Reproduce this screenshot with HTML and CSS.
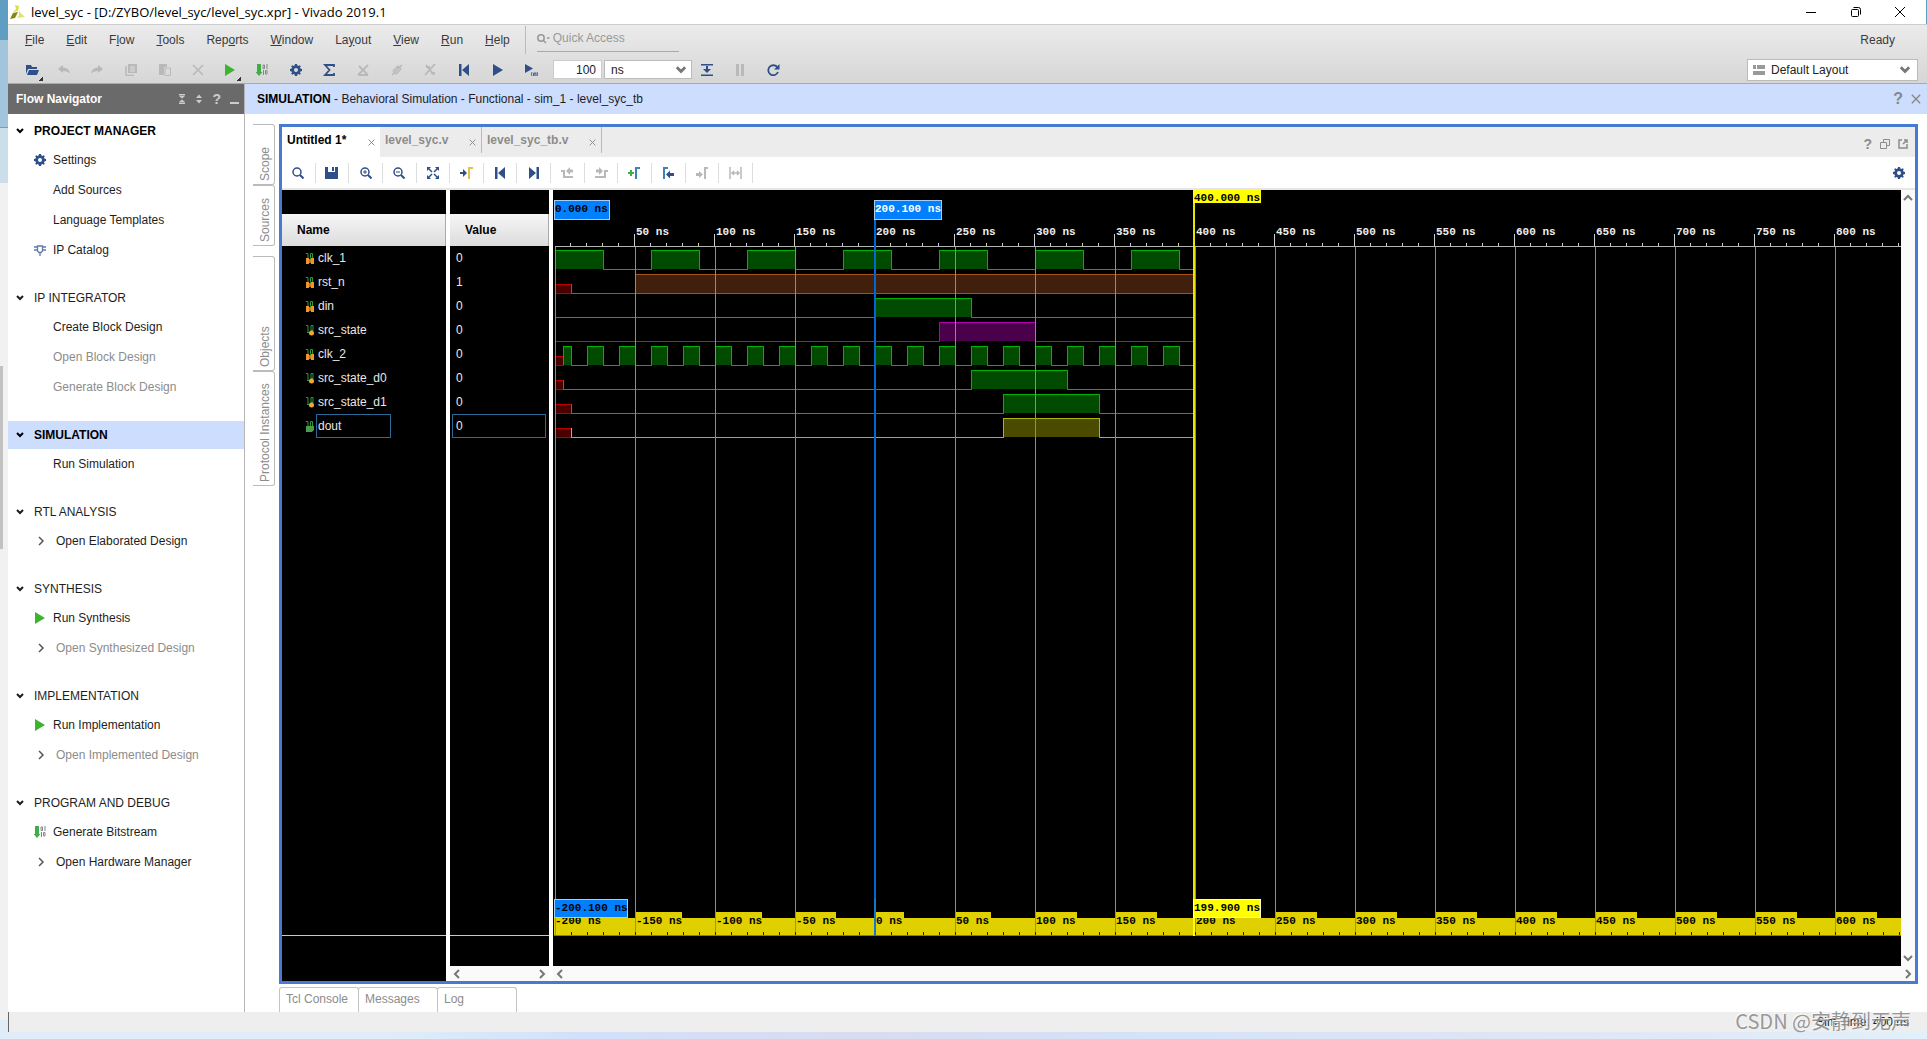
FILE: index.html
```html
<!DOCTYPE html>
<html lang="en">
<head>
<meta charset="utf-8">
<title>level_syc - Vivado 2019.1</title>
<link rel="stylesheet" href="styles.css">
</head>
<body>
<svg class="defs" aria-hidden="true">
  <symbol id="gear" viewBox="0 0 12 12"><path fill="currentColor" fill-rule="evenodd" d="M5 0h2l.4 1.6 1 .4L9.800 1.200l1 1L10 3.600l.4 1L12 5v2l-1.600.4-.4 1 .8 1.400-1 1-1.400-.8-1 .4L7 12H5l-.4-1.600-1-.4-1.400.8-1-1L2 8.400l-.4-1L0 7V5l1.600-.4.4-1-.8-1.400 1-1L3.600 2l1-.4zM6 4a2 2 0 1 0 0 4a2 2 0 0 0 0-4z"/></symbol>
  <symbol id="down" viewBox="0 0 10 10"><path d="M2 3l3 3 3-3" fill="none" stroke="currentColor" stroke-width="2"/></symbol>
  <symbol id="up" viewBox="0 0 10 10"><path d="M1 7l4-4 4 4" fill="none" stroke="currentColor" stroke-width="2"/></symbol>
  <symbol id="right" viewBox="0 0 10 10"><path d="M3 1l4 4-4 4" fill="none" stroke="currentColor" stroke-width="1.500"/></symbol>
  <symbol id="left" viewBox="0 0 10 10"><path d="M7 1L3 5l4 4" fill="none" stroke="currentColor" stroke-width="2"/></symbol>
  <symbol id="play" viewBox="0 0 12 12"><path d="M1 0l10 6-10 6z" fill="currentColor"/></symbol>
  <symbol id="bits" viewBox="0 0 12 12"><path d="M1 0h4v8h1.500L3 12-.5 8H1z" fill="#3fae49"/><path d="M7 1h1.500v3.500H7zM11 0v5M7.500 6v5M9.500 6.500H11V10H9.500z" fill="none" stroke="#888"/></symbol>
  <symbol id="chip" viewBox="0 0 12 12"><path d="M3.500 2h5v5l-1.500 1.500h-2L3.500 7zM0 3h3.500M0 6h3.500M8.500 3H12M8.500 6H12M6 8.500V12" fill="none" stroke="#6079aa" stroke-width="1.300"/></symbol>
  <symbol id="cross" viewBox="0 0 12 12"><path d="M1 1l10 10M11 1L1 11" fill="none" stroke="currentColor" stroke-width="1.600"/></symbol>
  <symbol id="first" viewBox="0 0 12 12"><path d="M1 0h2.500v12H1zM11 0v12L4 6z" fill="currentColor"/></symbol>
  <symbol id="last" viewBox="0 0 12 12"><path d="M8.500 0H11v12H8.500zM1 0v12l7-6z" fill="currentColor"/></symbol>
  <symbol id="lens" viewBox="0 0 12 12"><circle cx="5" cy="5" r="4" fill="none" stroke="currentColor" stroke-width="1.500"/><path d="M8 8l3.500 3.500" stroke="currentColor" stroke-width="2"/></symbol>
  <symbol id="sig-in" viewBox="0 0 8 12"><path d="M0 1.500h2v5M4.500 1.500h2v5h-2z" fill="none" stroke="#2c9a3c"/><path d="M0 6h3v2h2V6h3v6H5v-2H3v2H0z" fill="#f0952a"/><path d="M3 7h2v4H3z" fill="#c07418"/></symbol>
  <symbol id="sig-reg" viewBox="0 0 8 12"><path d="M0 1.500h2v7M5 1.500h2v5h-2zM1 8.500h4" fill="none" stroke="#2c9a3c"/><circle cx="5.500" cy="9" r="2.500" fill="#f5a13c"/></symbol>
  <symbol id="sig-out" viewBox="0 0 8 12"><path d="M0 1.500h2v5M4.500 1.500h2v5h-2z" fill="none" stroke="#2c9a3c"/><path d="M0 6h8v4l-2 2H0z" fill="#4a9c4a"/></symbol>
</svg>

<div class="desktop">
  <aside class="behind"><i class="b1"></i><i class="b2"></i><i class="b3"></i><i class="b4"></i><i class="b5"></i></aside>
  <div class="window">
    <header class="titlebar">
      <svg width="16" height="14" viewBox="0 0 16 14"><path d="M5 0l4 1-1 5-5 1 3-3z" fill="#d9e04a"/><path d="M3 8l5-1-3 6-5 1z" fill="#85850f"/><path d="M9 6l6 6-8 1 2-3z" fill="#dfe27a"/></svg>
      <span class="caption">level_syc - [D:/ZYBO/level_syc/level_syc.xpr] - Vivado 2019.1</span>
      <button aria-label="Minimize"><svg width="12" height="12"><path d="M1 6.500h10" stroke="#000"/></svg></button>
      <button aria-label="Restore"><svg width="12" height="12" fill="none" stroke="#000"><rect x="1.500" y="3.500" width="7" height="7" rx="1"/><path d="M3.500 1.500h5q2 0 2 2v5"/></svg></button>
      <button aria-label="Close"><svg width="12" height="12" stroke="#000"><path d="M1 1l10 10M11 1L1 11"/></svg></button>
    </header>

    <div class="chrome">
      <div class="menubar">
        <nav class="menus">
          <button><u>F</u>ile</button><button><u>E</u>dit</button><button>F<u>l</u>ow</button><button><u>T</u>ools</button><button>Rep<u>o</u>rts</button><button><u>W</u>indow</button><button>La<u>y</u>out</button><button><u>V</u>iew</button><button><u>R</u>un</button><button><u>H</u>elp</button>
        </nav>
        <label class="quick"><svg width="13" height="11" viewBox="0 0 13 11" fill="none" stroke="#999" stroke-width="1.500"><circle cx="4" cy="5" r="3.200"/><path d="M6 7l3 3"/><path d="M10 5h2.500"/></svg><input type="text" placeholder="Quick Access" aria-label="Quick Access"></label>
        <span class="ready">Ready</span>
      </div>
      <div class="toolbar">
        <div class="actions">
        <button class="more" aria-label="Open"><svg width="13" height="12" viewBox="0 0 13 12" fill="#2f4f88"><path d="M0 1h5l1 2h5v2H2L0 10z"/><path d="M3 6h10l-2 5H1z"/></svg></button>
        <button class="off" aria-label="Undo"><svg width="12" height="10" viewBox="0 0 12 10"><path d="M0 4l5-4v2.500q6 0 7 6-3-3-7-2.500V8z" fill="currentColor"/></svg></button>
        <button class="off" aria-label="Redo"><svg width="12" height="10" viewBox="0 0 12 10"><path d="M12 4L7 0v2.500q-6 0-7 6 3-3 7-2.500V8z" fill="currentColor"/></svg></button>
        <button class="off" aria-label="Copy"><svg width="12" height="12" viewBox="0 0 12 12"><path d="M3 0h9v9H3z" fill="currentColor"/><path d="M1 2v9.500h8" fill="none" stroke="currentColor" stroke-width="1.500"/><path d="M5 3h5M5 5h5M5 7h5" stroke="#ddd"/></svg></button>
        <button class="off" aria-label="Paste"><svg width="12" height="12" viewBox="0 0 12 12"><path d="M0 0h8v3H5v8H0z" fill="currentColor"/><path d="M6 4h5.500v7.500H6z" fill="none" stroke="currentColor"/></svg></button>
        <button class="off" aria-label="Delete"><svg width="12" height="12"><use href="#cross"/></svg></button>
        <button class="more green" aria-label="Run"><svg width="12" height="12"><use href="#play"/></svg></button>
        <button aria-label="Bitstream"><svg width="12" height="12"><use href="#bits"/></svg></button>
        <button aria-label="Settings"><svg width="12" height="12"><use href="#gear"/></svg></button>
        <button aria-label="Report"><svg width="12" height="12" viewBox="0 0 12 12"><path d="M11 3V1H2l4.500 5L2 11h9V9" fill="none" stroke="currentColor" stroke-width="1.800"/></svg></button>
        <button class="off" aria-label="Clear"><svg width="12" height="12" viewBox="0 0 12 12"><path d="M2 2l9 9M11 1L1 11M1 11h10" fill="none" stroke="currentColor" stroke-width="1.800"/></svg></button>
        <button class="off" aria-label="Disable"><svg width="12" height="12" viewBox="0 0 12 12"><path d="M11 1L1 11M2 7l5-5M5 10l5-5M2 7l3 3M7 2l3 3" fill="none" stroke="currentColor" stroke-width="1.500"/></svg></button>
        <button class="off" aria-label="Cancel"><svg width="12" height="12" viewBox="0 0 12 12"><path d="M2 1l4 5 4 5M11 0L1 11M2 3h4M7 9h4" fill="none" stroke="currentColor" stroke-width="1.800"/></svg></button>
        <button aria-label="Restart"><svg width="12" height="12"><use href="#first"/></svg></button>
        <button aria-label="Run all"><svg width="12" height="12"><use href="#play"/></svg></button>
        <button aria-label="Run for"><svg width="14" height="12" viewBox="0 0 14 12"><path d="M1 0l8 4.500L1 9z" fill="currentColor"/><path d="M8 8q-1.500 2 0 4M9.500 12V9h2.500v3M10.800 9v3M13 8q1.500 2 0 4" fill="none" stroke="currentColor" stroke-width=".8"/></svg></button>
        </div>
        <input class="amount" type="text" value="100" aria-label="Run time">
        <span class="pick unit"><select aria-label="Time unit"><option>ns</option></select><svg width="14" height="14"><use href="#down"/></svg></span>
        <div class="actions run">
        <button aria-label="Step"><svg width="12" height="12" viewBox="0 0 12 12"><path d="M0 0h12v1.500H0zM0 10.500h12V12H0zM5 2h2v3h3L6 9 2 5h3z" fill="currentColor"/></svg></button>
        <button class="off" aria-label="Pause"><svg width="12" height="12"><path d="M2 0h3v12H2zM7 0h3v12H7z" fill="currentColor"/></svg></button>
        <button aria-label="Relaunch"><svg width="13" height="12" viewBox="0 0 13 12"><path d="M10.500 3.500A5 5 0 1 0 11 8" fill="none" stroke="currentColor" stroke-width="1.800"/><path d="M12.500 0v5.500H7z" fill="currentColor"/></svg></button>
        </div>
        <span class="pick layout"><svg width="12" height="10" viewBox="0 0 12 10"><path d="M0 0h3v4H0zM4 0h8v4H4zM0 6h12v4H0z" fill="#999"/></svg><select aria-label="Layout"><option>Default Layout</option></select><svg width="14" height="14"><use href="#down"/></svg></span>
      </div>
    </div>

    <div class="main">
      <aside class="navigator">
        <h2>Flow Navigator
          <span><svg width="8" height="10" viewBox="0 0 8 10"><path d="M1 0h6v1.500H1zM1 8.500h6V10H1zM1 2h6L4 4.500zM1 8h6L4 5.500z" fill="currentColor"/></svg><svg width="8" height="10" viewBox="0 0 8 10"><path d="M1 4l3-3.500L7 4zM1 6l3 3.500L7 6z" fill="currentColor"/></svg><b>?</b><svg width="9" height="10"><path d="M0 8h9v2H0z" fill="currentColor"/></svg></span>
        </h2>
        <section><h3 class="bold"><svg width="10" height="10"><use href="#down"/></svg>PROJECT MANAGER</h3>
          <a href="#"><svg class="navy" width="12" height="12"><use href="#gear"/></svg>Settings</a><a href="#">Add Sources</a><a href="#">Language Templates</a><a href="#"><svg width="12" height="12"><use href="#chip"/></svg>IP Catalog</a></section>
        <section><h3><svg width="10" height="10"><use href="#down"/></svg>IP INTEGRATOR</h3>
          <a href="#">Create Block Design</a><a class="dim" href="#">Open Block Design</a><a class="dim" href="#">Generate Block Design</a></section>
        <section><h3 class="bold current"><svg width="10" height="10"><use href="#down"/></svg>SIMULATION</h3>
          <a href="#">Run Simulation</a></section>
        <section><h3><svg width="10" height="10"><use href="#down"/></svg>RTL ANALYSIS</h3>
          <a class="sub" href="#"><svg width="10" height="10"><use href="#right"/></svg>Open Elaborated Design</a></section>
        <section><h3><svg width="10" height="10"><use href="#down"/></svg>SYNTHESIS</h3>
          <a href="#"><svg class="green" width="11" height="12"><use href="#play"/></svg>Run Synthesis</a><a class="sub dim" href="#"><svg width="10" height="10"><use href="#right"/></svg>Open Synthesized Design</a></section>
        <section><h3><svg width="10" height="10"><use href="#down"/></svg>IMPLEMENTATION</h3>
          <a href="#"><svg class="green" width="11" height="12"><use href="#play"/></svg>Run Implementation</a><a class="sub dim" href="#"><svg width="10" height="10"><use href="#right"/></svg>Open Implemented Design</a></section>
        <section><h3><svg width="10" height="10"><use href="#down"/></svg>PROGRAM AND DEBUG</h3>
          <a href="#"><svg width="12" height="12"><use href="#bits"/></svg>Generate Bitstream</a><a class="sub" href="#"><svg width="10" height="10"><use href="#right"/></svg>Open Hardware Manager</a></section>
      </aside>

      <main class="work">
        <div class="context"><p><b>SIMULATION</b> - Behavioral Simulation - Functional - sim_1 - level_syc_tb</p><b class="q">?</b><svg width="10" height="10"><use href="#cross"/></svg></div>
        <div class="stage">
          <div class="rail">
            <button class="t1">Scope</button><button class="t1">Sources</button><i></i><button class="t2">Objects</button><button class="t2">Protocol Instances</button>
          </div>
          <div class="center">
            <div class="panel">
              <div class="tabs">
                <button class="tab on">Untitled 1*<svg width="7" height="7"><use href="#cross"/></svg></button><button class="tab">level_syc.v<svg width="7" height="7"><use href="#cross"/></svg></button><button class="tab wide">level_syc_tb.v<svg width="7" height="7"><use href="#cross"/></svg></button>
                <span class="tools"><b>?</b><svg width="10" height="10" fill="none" stroke="currentColor"><path d="M.5 3.500h6v6h-6zM3.500 3V.5h6v6H7"/></svg><svg width="10" height="10" fill="none" stroke="currentColor" stroke-width="1.500"><path d="M4 1H1v8h8V5M5 5l4-4M6 1h3v3"/></svg></span>
              </div>
              <div class="wavebar">
                <div class="wavebtns">
                  <button aria-label="Find"><svg width="12" height="12"><use href="#lens"/></svg></button>
                  <button aria-label="Save"><svg width="13" height="12"><path d="M0 0h3v5h7V0h3v12H0zM7 0h2v4H7z" fill="currentColor"/></svg></button>
                  <button aria-label="Zoom in"><svg width="12" height="12"><use href="#lens"/><path d="M3 5h4M5 3v4" stroke="currentColor"/></svg></button>
                  <button aria-label="Zoom out"><svg width="12" height="12"><use href="#lens"/><path d="M3 5h4" stroke="currentColor"/></svg></button>
                  <button aria-label="Zoom fit"><svg width="12" height="12" viewBox="0 0 12 12"><path d="M0 0h4L0 4zM12 0v4L8 0zM0 12V8l4 4zM12 12H8l4-4z" fill="currentColor"/><path d="M1 1l4 4M11 1L7 5M1 11l4-4M11 11L7 7" stroke="currentColor" stroke-width="1.500"/></svg></button>
                  <button aria-label="Go to cursor"><svg width="13" height="12" viewBox="0 0 13 12"><path d="M0 5h3V2l4 4-4 4V7H0z" fill="currentColor"/><path d="M9 12V1h4" fill="none" stroke="#e0c050" stroke-width="2"/></svg></button>
                  <button aria-label="Go to start"><svg width="12" height="12"><use href="#first"/></svg></button>
                  <button aria-label="Go to end"><svg width="12" height="12"><use href="#last"/></svg></button>
                  <button class="off" aria-label="Previous transition"><svg width="13" height="12" viewBox="0 0 13 12"><path d="M0 4h3v6h9" fill="none" stroke="currentColor" stroke-width="2"/><path d="M5 4l4-4v2.500h3v3H9V8z" fill="currentColor"/></svg></button>
                  <button class="off" aria-label="Next transition"><svg width="13" height="12" viewBox="0 0 13 12"><path d="M0 10h10V4h3" fill="none" stroke="currentColor" stroke-width="2"/><path d="M8 4L4 0v2.500H1v3h3V8z" fill="currentColor"/></svg></button>
                  <button aria-label="Add marker"><svg width="13" height="12" viewBox="0 0 13 12"><path d="M0 6h6M3 3v6" stroke="#3fae49" stroke-width="2"/><path d="M8 12V1h4" fill="none" stroke="#3a84b8" stroke-width="2"/></svg></button>
                  <button aria-label="Previous marker"><svg width="13" height="12" viewBox="0 0 13 12"><path d="M2 12V1h4" fill="none" stroke="#3a84b8" stroke-width="2"/><path d="M4 7.500l4-4V6h4v3H8v2.500z" fill="currentColor"/></svg></button>
                  <button class="off" aria-label="Next marker"><svg width="13" height="12" viewBox="0 0 13 12"><path d="M0 6h3V4l4 3.500L3 11V9H0z" fill="currentColor"/><path d="M9 12V1h3" fill="none" stroke="currentColor" stroke-width="2"/></svg></button>
                  <button class="off" aria-label="Swap cursors"><svg width="13" height="12" viewBox="0 0 13 12"><path d="M1 0v12M12 0v12M3 6h7M5 4L3 6l2 2M8 4l2 2-2 2" fill="none" stroke="currentColor" stroke-width="1.500"/></svg></button>
                </div>
                <button class="cog" aria-label="Wave settings"><svg width="12" height="12"><use href="#gear"/></svg></button>
              </div>
              <div class="viewer">
                <div class="col names">
                  <h4>Name</h4>
                  <ul>
                    <li><svg width="8" height="12"><use href="#sig-in"/></svg><span>clk_1</span></li>
                    <li><svg width="8" height="12"><use href="#sig-in"/></svg><span>rst_n</span></li>
                    <li><svg width="8" height="12"><use href="#sig-in"/></svg><span>din</span></li>
                    <li><svg width="8" height="12"><use href="#sig-reg"/></svg><span>src_state</span></li>
                    <li><svg width="8" height="12"><use href="#sig-in"/></svg><span>clk_2</span></li>
                    <li><svg width="8" height="12"><use href="#sig-reg"/></svg><span>src_state_d0</span></li>
                    <li><svg width="8" height="12"><use href="#sig-reg"/></svg><span>src_state_d1</span></li>
                    <li class="picked"><svg width="8" height="12"><use href="#sig-out"/></svg><span>dout</span></li>
                  </ul>
                  <div class="foot"></div>
                </div>
                <div class="col values">
                  <h4>Value</h4>
                  <ul><li>0</li><li>1</li><li>0</li><li>0</li><li>0</li><li>0</li><li>0</li><li class="picked">0</li></ul>
                  <div class="foot"></div>
                  <div class="hbar"><svg width="10" height="10"><use href="#left"/></svg><svg class="flip" width="10" height="10"><use href="#left"/></svg></div>
                </div>
                <div class="wave">
                  <div class="plot">
                    <!-- time ruler: 16px per 10 ns -->
                    <svg class="ruler" width="100%" height="57" shape-rendering="crispEdges">
                      <defs><pattern id="ticks" x="1" y="0" width="80" height="57" patternUnits="userSpaceOnUse"><path d="M0 44h1v12h-1zM16 53h1v3h-1zM32 53h1v3h-1zM48 53h1v3h-1zM64 53h1v3h-1z" fill="#ccc"/></pattern></defs>
                      <rect x="17" width="100%" height="57" fill="url(#ticks)"/>
                      <rect x="2" y="56" width="100%" height="1" fill="#b4b4b4"/>
                      <g fill="#eee"><text x="83" y="45">50 ns</text><text x="163" y="45">100 ns</text><text x="243" y="45">150 ns</text><text x="323" y="45">200 ns</text><text x="403" y="45">250 ns</text><text x="483" y="45">300 ns</text><text x="563" y="45">350 ns</text><text x="643" y="45">400 ns</text><text x="723" y="45">450 ns</text><text x="803" y="45">500 ns</text><text x="883" y="45">550 ns</text><text x="963" y="45">600 ns</text><text x="1043" y="45">650 ns</text><text x="1123" y="45">700 ns</text><text x="1203" y="45">750 ns</text><text x="1283" y="45">800 ns</text></g>
                      <path d="M1 10h56v20h-56zM321 10h68v20h-68z" fill="#a8cdf2"/><path d="M2 11h54v18h-54zM322 11h66v18h-66z" fill="#0080ff"/>
                      <text x="2" y="22">0.000 ns</text><text x="322" y="22" fill="#fff">200.100 ns</text>
                      <path d="M321 30h2v27h-2z" fill="#0068d0"/>
                      <path d="M640 0h68v13h-68z" fill="#ff0"/><path d="M640 13h2v44h-2z" fill="#e6e600"/><text x="641" y="11">400.000 ns</text>
                    </svg>
                    <svg class="traces" width="100%" shape-rendering="crispEdges">
                      <defs><pattern id="grid" x="2" y="0" width="80" height="80" patternUnits="userSpaceOnUse"><path d="M0 0h1v80H0z" fill="#8c8c8c"/></pattern></defs>
                      <g transform="translate(2)">
                        <path class="x" d="M0 46V37H16V46zM0 118V109H8V118zM0 142V133H8V142zM0 166V157H16V166zM0 190V181H16V190z"/>
                        <path class="g" d="M0 22V3h48v19h48V3h48v19h48V3h48v19h48V3h48v19h48V3h48v19h48V3h48v19h48V3h48v19h14"/>
                        <path class="o" d="M16 46h64V27h558v19H80"/>
                        <path class="g" d="M0 70h320V51h96v19h222"/>
                        <path class="m" d="M0 94h384V75h96v19h158"/>
                        <path class="g" d="M8 118v-19h8v19h16v-19h16v19h16v-19h16v19h16v-19h16v19h16v-19h16v19h16v-19h16v19h16v-19h16v19h16v-19h16v19h16v-19h16v19h16v-19h16v19h16v-19h16v19h16v-19h16v19h16v-19h16v19h16v-19h16v19h16v-19h16v19h16v-19h16v19h16v-19h16v19h16v-19h16v19h16v-19h16v19h16v-19h16v19h14"/>
                        <path class="g" d="M8 142h408v-19h96v19h126"/>
                        <path class="g" d="M16 166h432v-19h96v19h94"/>
                        <path class="y" d="M16 190h432v-19h96v19h94"/>
                        <path d="M16 37v9" stroke="#a85018"/><path d="M8 133v9M16 157v9" stroke="#00b400"/><path d="M16 181v9" stroke="#e0b000"/>
                      </g>
                      <rect width="100%" height="100%" fill="url(#grid)"/>
                      <rect x="321" width="2" height="100%" fill="#0068d0"/>
                      <rect x="640" width="2" height="100%" fill="#e6e600"/>
                    </svg>
                    <!-- offsets from the main cursor -->
                    <svg class="ruler" width="100%" height="67" shape-rendering="crispEdges">
                      <defs><pattern id="marks" x="2" y="0" width="16" height="67" patternUnits="userSpaceOnUse"><path d="M0 33h1v3h-1z" fill="#222"/></pattern></defs>
                      <rect width="100%" height="13" fill="url(#grid)"/>
                      <path fill="#e0d000" d="M82 13h47v6h-47zM162 13h47v6h-47zM242 13h41v6h-41zM322 13h29v6h-29zM402 13h36v6h-36zM482 13h42v6h-42zM562 13h42v6h-42zM722 13h42v6h-42zM802 13h42v6h-42zM882 13h42v6h-42zM962 13h42v6h-42zM1042 13h42v6h-42zM1122 13h42v6h-42zM1202 13h42v6h-42zM1282 13h42v6h-42z"/>
                      <rect x="1" y="19" width="100%" height="18" fill="#e0d000"/>
                      <rect y="13" width="100%" height="23" fill="url(#grid)"/>
                      <rect x="16" width="100%" height="67" fill="url(#marks)"/><rect x="1" y="36" width="100%" height="1" fill="#8a8000"/>
                      <g><text x="2" y="25">-200 ns</text><text x="83" y="25">-150 ns</text><text x="163" y="25">-100 ns</text><text x="243" y="25">-50 ns</text><text x="323" y="25">0 ns</text><text x="403" y="25">50 ns</text><text x="483" y="25">100 ns</text><text x="563" y="25">150 ns</text><text x="643" y="25">200 ns</text><text x="723" y="25">250 ns</text><text x="803" y="25">300 ns</text><text x="883" y="25">350 ns</text><text x="963" y="25">400 ns</text><text x="1043" y="25">450 ns</text><text x="1123" y="25">500 ns</text><text x="1203" y="25">550 ns</text><text x="1283" y="25">600 ns</text></g>
                      <path d="M321 0h2v37h-2z" fill="#1478c8"/><path d="M640 0h2v37h-2z" fill="#ff0"/>
                      <path d="M1 0h74v19h-74z" fill="#a8cdf2"/><path d="M2 1h72v17h-72z" fill="#0080ff"/><text x="2" y="12">-200.100 ns</text>
                      <path d="M640 0h68v19h-68z" fill="#ffffc0"/><path d="M641 1h66v17h-66z" fill="#ff0"/><text x="641" y="12">199.900 ns</text>
                    </svg>
                  </div>
                  <div class="vbar"><svg width="10" height="10"><use href="#up"/></svg><svg class="flip" width="10" height="10"><use href="#up"/></svg></div>
                  <div class="hbar"><svg width="10" height="10"><use href="#left"/></svg><svg class="flip" width="10" height="10"><use href="#left"/></svg></div>
                </div>
              </div>
            </div>
            <div class="dock"><button>Tcl Console</button><button>Messages</button><button>Log</button></div>
          </div>
        </div>
      </main>
    </div>
    <footer class="status">Sim Time: 400 ns</footer>
  </div>
</div>
<div class="watermark">CSDN @安静到无声</div>
</body>
</html>
```
FILE: styles.css
```css
* { box-sizing: border-box; }
body { margin: 0; overflow: hidden; font: 12px/16px "Liberation Sans", Arial, sans-serif; color: #1e1e1e; background: #fff; }
button { font: inherit; color: inherit; background: none; border: 0; padding: 0; }
input, select { font: inherit; color: inherit; border: 0; background: none; padding: 0; margin: 0; outline: 0; }
h2, h3, h4, p, ul { margin: 0; padding: 0; font: inherit; }
ul { list-style: none; }
svg { display: block; flex: none; }
.defs { position: absolute; width: 0; height: 0; }

.desktop { display: flex; height: 100vh; padding-bottom: 7px; background: linear-gradient(90deg, #e0edf8, #e0edf8 20%, #d3e0fa 30%, #d8dcf0 45%, #d5e2f8 60%, #dfe6f4 80%, #e2f0fa); }
.behind { width: 8px; flex: none; display: flex; flex-direction: column; }
.b1 { height: 40px; background: #5f9ec2; }
.b2 { height: 88px; background: #a2c5db; border-bottom: 1px solid #7c9eb2; }
.b3 { height: 55px; background: #cbdfeb; }
.b4 { flex: 1; background: linear-gradient(#c1c1c1, #c1c1c1) 0 183px / 3px 183px no-repeat #f1f1f1; }
.b5 { height: 12px; }
.window { flex: 1; min-width: 0; display: flex; flex-direction: column; background: #fff; }

.titlebar { height: 24px; flex: none; display: flex; align-items: center; padding: 0 9px 0 2px; border-right: 1px solid #5aa0c0; }
.caption { flex: 1; padding-left: 5px; color: #000; font: 13px/16px "Open Sans", "Noto Sans", sans-serif; }
.titlebar button { width: 45px; display: grid; place-items: center; }
.titlebar button:last-child { width: 39px; padding-left: 5px; }

.chrome { height: 60px; flex: none; border-top: 1px solid #ccc; border-bottom: 1px solid #aaa; background: linear-gradient(#ebebeb, #d6d6d6); color: #3a3a3a; }
.menubar { height: 30px; display: flex; align-items: center; }
.menus { display: flex; gap: 22px; padding: 0 15px 0 17px; height: 28px; border-right: 1px solid #bbb; align-items: center; margin-right: 11px; }
.quick { width: 142px; height: 24px; display: flex; align-items: center; gap: 3px; padding-bottom: 3px; border-bottom: 1px solid #aaa; }
.quick input { width: 100px; }
.quick input::placeholder { color: #999; opacity: 1; }
.ready { margin: 0 32px 0 auto; }
.toolbar { height: 29px; display: flex; align-items: center; padding: 0 9px; color: #2f4f88; }
.actions { display: flex; width: 531px; }
.actions.run { width: 100px; margin-left: -2px; }
.toolbar button { flex: 1; height: 22px; display: grid; place-items: center; }
.toolbar .off, .wavebtns .off { color: #b9b9b9; }
.toolbar .more { flex: none; width: 30px; background: linear-gradient(135deg, transparent 50%, #333 50%) 22px 18px / 4px 4px no-repeat; }
.toolbar .green, .green { color: #3eb32d; }
.amount { width: 49px; height: 19px; margin-left: 5px; padding-right: 5px; background: #fff; border: 1px solid #ccc; text-align: right; color: #222; }
.pick { display: flex; align-items: center; background: #fff; border: 1px solid #bbb; color: #777; }
.pick select { flex: 1; appearance: none; color: #222; }
.unit { width: 88px; height: 19px; margin-left: 2px; padding: 0 3px 0 6px; }
.layout { width: 171px; height: 22px; margin-left: auto; padding: 0 5px; gap: 6px; }

.main { flex: 1; min-height: 0; display: flex; }
.navigator { width: 237px; flex: none; border-right: 1px solid #b5b5b5; overflow: hidden; }
.navigator h2 { height: 30px; margin-bottom: 3px; padding: 0 5px 0 8px; display: flex; align-items: center; justify-content: space-between; background: #6a6a6a; color: #fff; font-weight: bold; }
.navigator h2 span { display: flex; align-items: center; gap: 9px; color: #ccc; font-size: 14px; }
.navigator section { padding-bottom: 19px; }
.navigator h3 { height: 28px; display: flex; align-items: center; gap: 9px; padding-left: 7px; }
.navigator .bold { font-weight: bold; color: #000; }
.navigator .current { background: #ccddfe; }
.navigator a { height: 30px; display: flex; align-items: center; padding-left: 45px; color: inherit; text-decoration: none; }
.navigator a svg { margin: 0 7px 0 -19px; width: 12px; }
.navigator .sub { padding-left: 48px; }
.navigator .sub svg { margin: 0 10px 0 -20px; width: 10px; color: #555; }
.navigator .dim { color: #8c8c8c; }
.navy { color: #2f4f88; }

.work { flex: 1; min-width: 0; display: flex; flex-direction: column; }
.context { height: 30px; flex: none; display: flex; align-items: center; gap: 8px; padding: 0 6px 0 12px; background: #ccddfe; color: #888; }
.context p { flex: 1; color: #1e1e1e; }
.context p b { color: #000; }
.q { font-size: 16px; }
.stage { flex: 1; min-height: 0; display: flex; padding: 10px 9px 0 8px; }
.rail { width: 22px; flex: none; margin-right: 4px; display: flex; flex-direction: column; }
.rail button { writing-mode: vertical-rl; transform: rotate(180deg); display: flex; align-items: center; padding: 3px 2px 0 0; border: 1px solid #bbb; border-width: 1px 0 1px 1px; border-radius: 3px 0 0 3px; color: #8c8c8c; text-align: start; }
.rail .t1 { height: 61px; }
.rail .t2 { height: 115px; }
.rail i { height: 10px; }
.center { flex: 1; min-width: 0; display: flex; flex-direction: column; }
.panel { flex: 1; min-height: 0; display: flex; flex-direction: column; border: 3px solid #477bd0; }

.tabs { height: 30px; flex: none; display: flex; background: #ececec; color: #8c8c8c; }
.tab { width: 102px; display: flex; align-items: center; justify-content: space-between; padding: 0 5px 0 5px; font-weight: bold; border-right: 1px solid #bbb; height: 26px; }
.tab svg { margin-top: 4px; }
.tab.wide { width: 120px; }
.tab.on { width: 98px; height: 30px; padding-bottom: 4px; border: 0; background: #fff; color: #000; }
.tab.on svg { color: #888; }
.tools { margin-left: auto; padding: 4px 7px 0 0; display: flex; align-items: center; gap: 8px; font-size: 14px; }
.wavebar { height: 33px; flex: none; display: flex; align-items: center; justify-content: space-between; border-bottom: 2px solid #e6e6e6; color: #2f4f88; }
.wavebtns { display: flex; width: 471px; height: 20px; }
.wavebtns button { flex: 1; display: grid; place-items: center; border-right: 1px solid #ddd; }
.cog { padding-right: 10px; }

.viewer { flex: 1; min-height: 0; display: flex; }
.col { flex: none; display: flex; flex-direction: column; padding-top: 24px; background: #000; color: #e8e8e8; }
.names { width: 164px; margin-right: 4px; }
.values { width: 99px; margin-right: 4px; }
.col h4 { height: 32px; flex: none; display: flex; align-items: center; padding-left: 15px; background: linear-gradient(#f6f6f6, #dcdcde); border-right: 1px solid #aaa; color: #000; font-weight: bold; }
.col ul { flex: 1; }
.col li { height: 24px; display: flex; align-items: center; padding-left: 24px; }
.names span { padding: 3px 4px 3px 4px; }
.names .picked span { width: 75px; margin-left: 2px; padding-left: 1px; border: 1px solid #2a6a94; }
.values li { padding-left: 6px; }
.values .picked { margin: 0 3px 0 2px; padding-left: 3px; border: 1px solid #2a6a94; }
.foot { height: 46px; border-top: 1px solid #c8c8c8; }
.values .foot { height: 31px; }
.hbar { height: 15px; flex: none; display: flex; align-items: center; justify-content: space-between; padding: 0 2px; background: #fafafa; color: #777; }
.flip { transform: rotate(180deg); }
.wave { flex: 1; min-width: 0; display: grid; grid-template: 1fr 15px / 1fr 14px; }
.wave .hbar { grid-column: 1 / 3; }
.plot { min-width: 0; min-height: 0; display: flex; flex-direction: column; background: #000; overflow: hidden; }
.ruler { font: bold 11px "Liberation Mono", monospace; }
.traces { flex: 1; min-height: 0; }
.traces .g { fill: #004b00; stroke: #00b400; }
.traces .o { fill: #40200c; stroke: #a85018; }
.traces .m { fill: #4b004b; stroke: #b400b4; }
.traces .y { fill: #4b4b00; stroke: #b4b400; }
.traces .x { fill: #4b0000; stroke: #b40000; }
.vbar { display: flex; flex-direction: column; align-items: center; justify-content: space-between; padding: 3px 0; background: #fafafa; color: #777; }

.dock { height: 28px; flex: none; display: flex; padding-top: 3px; }
.dock button { width: 80px; margin-right: -1px; padding: 0 0 3px 6px; text-align: left; border: 1px solid #c4c4c4; border-bottom: 0; border-radius: 3px 3px 0 0; color: #8c8c8c; }
.status { height: 20px; flex: none; padding: 2px 18px 0 0; background: #eee; border-left: 1px solid #666; text-align: right; }
.watermark { position: absolute; right: 16px; bottom: 6px; font: 20px/24px "Noto Sans CJK SC", sans-serif; color: #8a8a8a; text-shadow: -1px -1px 0 #fff; opacity: .85; }
```
